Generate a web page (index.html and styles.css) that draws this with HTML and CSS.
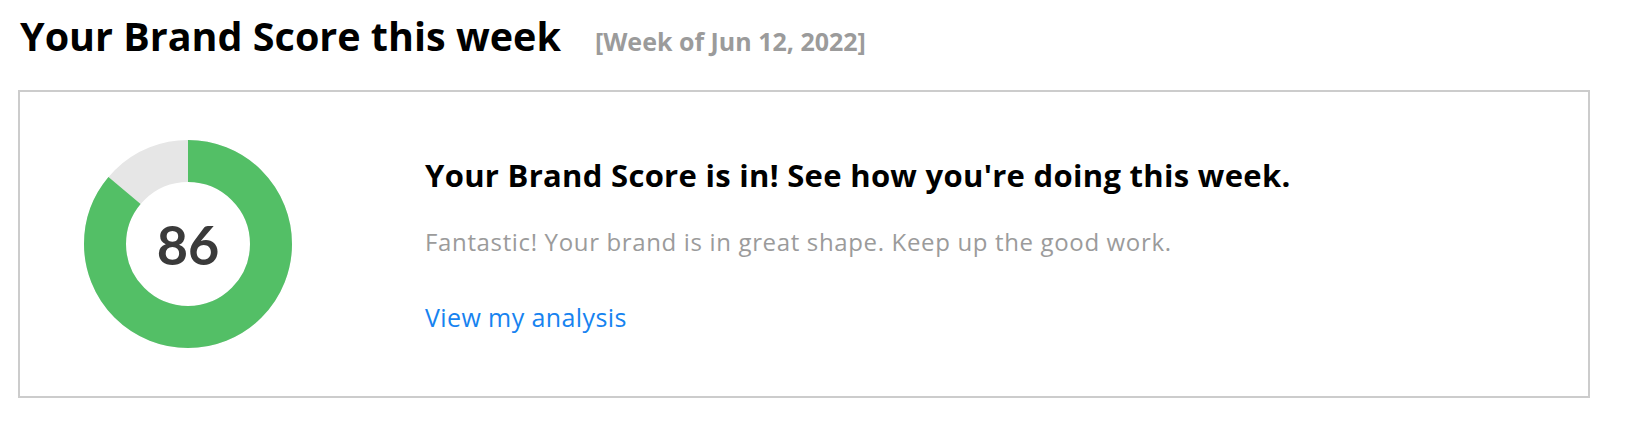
FILE: index.html
```html
<!DOCTYPE html>
<html lang="en">
<head>
    <meta charset="UTF-8">
    <meta name="viewport" content="width=device-width, initial-scale=1.0">
    <title>Brand Score</title>
    <link rel="stylesheet" href="styles.css">
</head>
<body>
    <main class="page">
        <header class="score-header">
            <h1>Your Brand Score this week</h1>
            <span class="week-label">[Week of Jun 12, 2022]</span>
        </header>

        <section class="score-card">
            <div class="donut">
                <svg width="208" height="208" viewBox="0 0 208 208">
                    <circle class="donut-track" cx="104" cy="104" r="83"></circle>
                    <circle class="donut-fill" cx="104" cy="104" r="83"
                        stroke-dasharray="448.5 521.5" transform="rotate(-90 104 104)"></circle>
                </svg>
                <span class="donut-value">86</span>
            </div>

            <div class="score-text">
                <h2>Your Brand Score is in! See how you're doing this week.</h2>
                <p>Fantastic! Your brand is in great shape. Keep up the good work.</p>
                <a href="#">View my analysis</a>
            </div>
        </section>
    </main>
</body>
</html>
```

FILE: styles.css
```css
body {
    font-family: "Open Sans", Lato, sans-serif;
    margin: 0;
    padding: 0;
    background-color: #fff;
    color: #000;
}

.page {
    padding: 12px 40px 0 18px;
}

.score-header {
    display: flex;
    align-items: baseline;
    padding-left: 2px;
}

.score-header h1 {
    margin: 0;
    font-size: 39.5px;
    line-height: 48px;
    font-weight: 700;
}

.week-label {
    margin-left: 34px;
    font-size: 25px;
    font-weight: 700;
    color: #9b9b9b;
}

.score-card {
    margin-top: 30px;
    border: 2px solid #cccccc;
    padding: 48px 0 48px 64px;
    display: flex;
    align-items: center;
}

.donut {
    display: grid;
    place-items: center;
    width: 208px;
    height: 208px;
}

.donut svg,
.donut-value {
    grid-area: 1 / 1;
}

.donut-track,
.donut-fill {
    fill: none;
    stroke-width: 42;
}

.donut-track {
    stroke: #e6e6e6;
}

.donut-fill {
    stroke: #53bf66;
}

.donut-value {
    font-family: Lato, sans-serif;
    font-size: 54px;
    font-weight: 700;
    color: #3a3a3a;
}

.score-text {
    margin-left: 133px;
}

.score-text h2 {
    margin: 0;
    font-size: 31px;
    line-height: 36px;
    font-weight: 700;
    letter-spacing: 0.3px;
}

.score-text p {
    margin: 35px 0 0;
    font-size: 24px;
    line-height: 28px;
    letter-spacing: 0.65px;
    color: #9b9b9b;
}

.score-text a {
    display: block;
    margin-top: 47px;
    font-size: 25px;
    line-height: 28px;
    letter-spacing: 0.4px;
    color: #1783f0;
    text-decoration: none;
}
```
